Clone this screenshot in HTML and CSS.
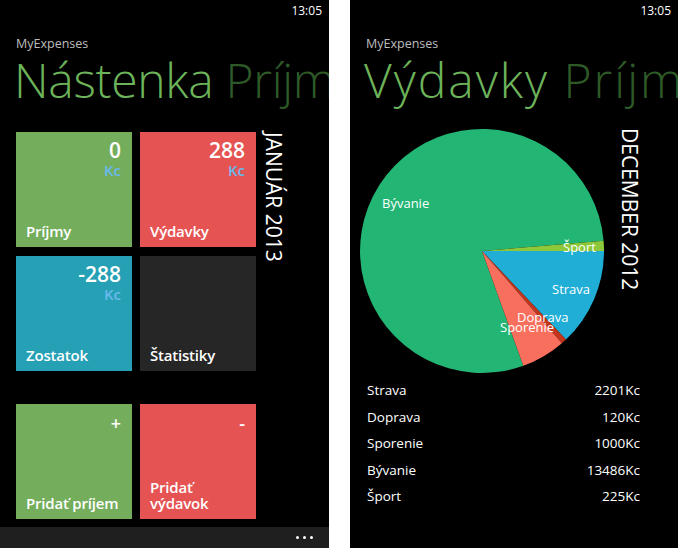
FILE: index.html
```html
<!DOCTYPE html>
<html lang="sk">
<head>
<meta charset="utf-8">
<title>MyExpenses</title>
<link rel="stylesheet" href="styles.css">
</head>
<body>
<div class="screens">
  <section class="phone">
    <div class="status">13:05</div>
    <div class="app-name">MyExpenses</div>
    <h1 class="title"><span class="active">Nástenka</span> <span class="next">Príjmy</span></h1>
    <div class="dash">
      <div class="tiles">
        <div class="tile green">
          <div class="amount">0</div>
          <div class="cur">Kc</div>
          <div class="label">Príjmy</div>
        </div>
        <div class="tile red">
          <div class="amount">288</div>
          <div class="cur">Kc</div>
          <div class="label">Výdavky</div>
        </div>
        <div class="tile teal">
          <div class="amount">-288</div>
          <div class="cur">Kc</div>
          <div class="label">Zostatok</div>
        </div>
        <div class="tile dark">
          <div class="label">Štatistiky</div>
        </div>
      </div>
      <div class="vmonth vmonth-left">JANUÁR 2013</div>
    </div>
    <div class="tiles actions">
      <div class="tile green">
        <div class="sign">+</div>
        <div class="label">Pridať príjem</div>
      </div>
      <div class="tile red">
        <div class="sign">-</div>
        <div class="label">Pridať<br>výdavok</div>
      </div>
    </div>
    <div class="appbar"><span class="dot"></span><span class="dot"></span><span class="dot"></span></div>
  </section>

  <section class="phone right">
    <div class="status">13:05</div>
    <div class="app-name">MyExpenses</div>
    <h1 class="title title-wide"><span class="active">Výdavky</span> <span class="next">Príjmy</span></h1>
    <div class="chart-row">
      <svg class="pie" width="244" height="246" viewBox="0 0 244 246">
        <path d="M122 123 L163.3 237.8 A122 122 0 1 1 243.6 112.8 Z" fill="#22b574"/>
        <path d="M122 123 L243.6 112.8 A122 122 0 0 1 244 123 Z" fill="#8cc83a"/>
        <path d="M122 123 L244 123 A122 122 0 0 1 206 211.5 Z" fill="#20aed6"/>
        <path d="M122 123 L206 211.5 A122 122 0 0 1 201.9 215.2 Z" fill="#c3361c"/>
        <path d="M122 123 L201.9 215.2 A122 122 0 0 1 163.3 237.8 Z" fill="#f96f5e"/>
        <g class="pie-labels">
          <text x="22" y="80">Bývanie</text>
          <text x="203" y="124">Šport</text>
          <text x="192" y="166">Strava</text>
          <text x="157" y="194">Doprava</text>
          <text x="140" y="204">Sporenie</text>
        </g>
      </svg>
      <div class="vmonth vmonth-right">DECEMBER 2012</div>
    </div>
    <ul class="list">
      <li><span>Strava</span><span>2201Kc</span></li>
      <li><span>Doprava</span><span>120Kc</span></li>
      <li><span>Sporenie</span><span>1000Kc</span></li>
      <li><span>Bývanie</span><span>13486Kc</span></li>
      <li><span>Šport</span><span>225Kc</span></li>
    </ul>
  </section>
</div>
</body>
</html>
```

FILE: styles.css
```css
html, body {
  margin: 0;
  padding: 0;
  background: #fff;
}
body {
  font-family: "Open Sans", "Noto Sans", sans-serif;
  color: #fff;
}
.screens {
  display: flex;
  gap: 21px;
  width: 678px;
  height: 548px;
}
.phone {
  position: relative;
  width: 329px;
  height: 548px;
  background: #000;
  overflow: hidden;
  display: flex;
  flex-direction: column;
}
.phone.right {
  width: 328px;
}
.status {
  height: 22px;
  padding: 2px 7px 0 0;
  box-sizing: border-box;
  text-align: right;
  font-size: 12px;
  line-height: 18px;
  color: #fff;
}
.app-name {
  margin-top: 13px;
  padding-left: 16px;
  font-size: 12.5px;
  line-height: 17px;
  color: #bdbdbd;
}
.title {
  margin: 3px 0 0;
  padding-left: 14px;
  font-weight: 300;
  font-size: 48px;
  line-height: 50px;
  white-space: nowrap;
  letter-spacing: -0.3px;
}
.title-wide {
  letter-spacing: 2px;
}
.title .active { color: #6cb35a; }
.title .next { color: #2e5a28; }

.dash {
  display: flex;
  margin-top: 27px;
  padding-left: 16px;
  gap: 8px;
}
.tiles {
  display: grid;
  grid-template-columns: 116px 116px;
  grid-auto-rows: 115px;
  gap: 9px 8px;
}
.tile {
  box-sizing: border-box;
  padding: 6px 11px 8px 10px;
  display: flex;
  flex-direction: column;
  align-items: flex-end;
  font-weight: 600;
}
.green { background: #74ae5c; }
.red { background: #e55353; }
.teal { background: #25a0b4; }
.dark { background: #262626; }
.amount {
  font-size: 21px;
  line-height: 24px;
}
.cur {
  font-size: 15px;
  line-height: 16px;
  color: #6ab9ee;
}
.sign {
  font-size: 18px;
  line-height: 22px;
  margin-top: 2px;
}
.label {
  margin-top: auto;
  align-self: flex-start;
  font-size: 15px;
  line-height: 16px;
  letter-spacing: -0.2px;
  white-space: nowrap;
}
.vmonth {
  writing-mode: vertical-rl;
  font-weight: 400;
  white-space: nowrap;
  color: #fff;
}
.vmonth-left {
  font-size: 21px;
  line-height: 20px;
}
.actions {
  margin-top: 33px;
  padding-left: 16px;
}
.appbar {
  margin-top: auto;
  height: 21px;
  background: #1f1f1f;
  display: flex;
  justify-content: flex-end;
  align-items: center;
  gap: 4px;
  padding-right: 16px;
}
.dot {
  width: 3px;
  height: 3px;
  border-radius: 50%;
  background: #fff;
}

.chart-row {
  display: flex;
  margin-top: 23px;
  padding-left: 10px;
  gap: 15px;
}
.pie {
  display: block;
  flex: none;
}
.pie-labels text {
  fill: #fff;
  font-family: "Open Sans", "Noto Sans", sans-serif;
  font-size: 13px;
}
.vmonth-right {
  font-size: 21px;
  line-height: 22px;
}
.list {
  list-style: none;
  margin: 3px 0 0;
  padding: 0 38px 0 17px;
}
.list li {
  display: flex;
  justify-content: space-between;
  font-size: 13.5px;
  line-height: 26.6px;
}
```
